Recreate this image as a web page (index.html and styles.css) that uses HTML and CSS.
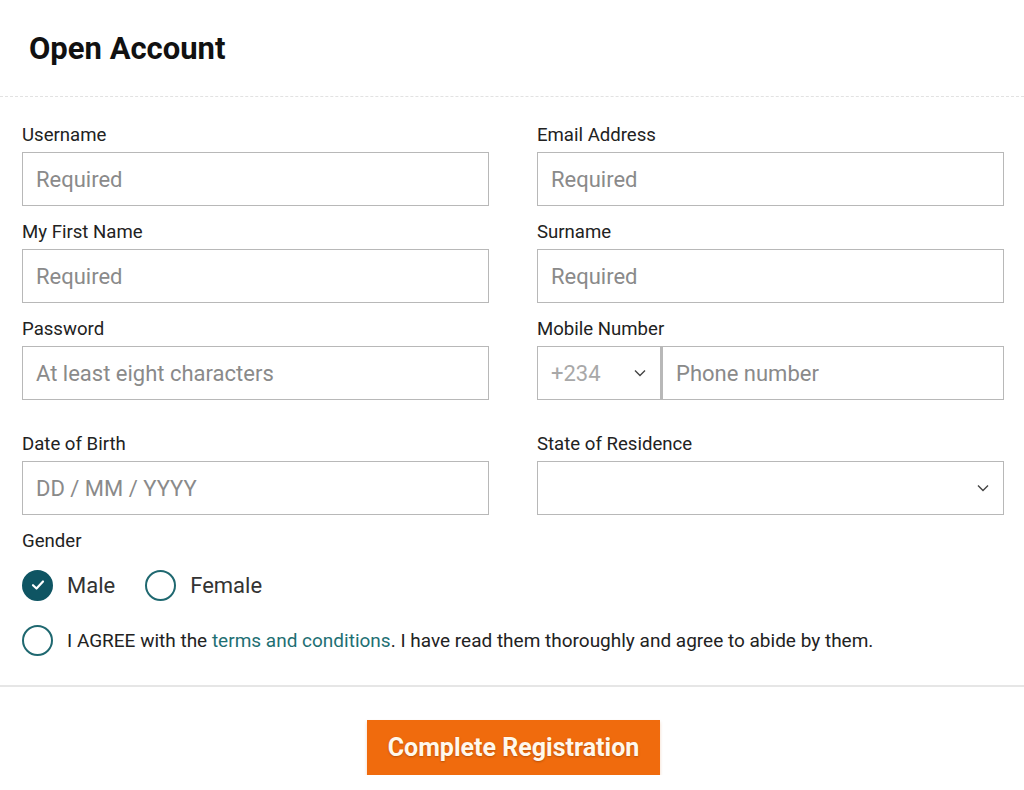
FILE: index.html
```html
<!DOCTYPE html>
<html lang="en">
<head>
<meta charset="utf-8">
<title>Open Account</title>
<link rel="stylesheet" href="styles.css">
</head>
<body>
<div class="page">
  <header class="header">
    <h1 class="title">Open Account</h1>
  </header>
  <form class="form">
    <div class="grid">
      <div class="field">
        <label class="label">Username</label>
        <div class="input"><span class="ph">Required</span></div>
      </div>
      <div class="field">
        <label class="label">Email Address</label>
        <div class="input"><span class="ph">Required</span></div>
      </div>
      <div class="field">
        <label class="label">My First Name</label>
        <div class="input"><span class="ph">Required</span></div>
      </div>
      <div class="field">
        <label class="label">Surname</label>
        <div class="input"><span class="ph">Required</span></div>
      </div>
      <div class="field">
        <label class="label">Password</label>
        <div class="input"><span class="ph">At least eight characters</span></div>
      </div>
      <div class="field">
        <label class="label">Mobile Number</label>
        <div class="phone">
          <div class="code">
            <span class="code-text">+234</span>
            <svg class="chev" width="12" height="8" viewBox="0 0 12 8"><path d="M1 1.5 L6 6.5 L11 1.5" fill="none" stroke="#444" stroke-width="1.4"/></svg>
          </div>
          <div class="input num"><span class="ph">Phone number</span></div>
        </div>
      </div>
      <div class="field spaced">
        <label class="label">Date of Birth</label>
        <div class="input"><span class="ph">DD / MM / YYYY</span></div>
      </div>
      <div class="field spaced">
        <label class="label">State of Residence</label>
        <div class="input select">
          <svg class="chev" width="12" height="8" viewBox="0 0 12 8"><path d="M1 1.5 L6 6.5 L11 1.5" fill="none" stroke="#444" stroke-width="1.4"/></svg>
        </div>
      </div>
    </div>

    <div class="gender">
      <span class="label">Gender</span>
      <div class="radios">
        <span class="opt">
          <span class="radio checked">
            <svg width="14" height="12" viewBox="0 0 14 12"><path d="M2 6.2 L5.5 9.5 L12 2.5" fill="none" stroke="#fff" stroke-width="2.2" stroke-linecap="round" stroke-linejoin="round"/></svg>
          </span>
          <span class="opt-text">Male</span>
        </span>
        <span class="opt">
          <span class="radio"></span>
          <span class="opt-text">Female</span>
        </span>
      </div>
    </div>

    <div class="agree">
      <span class="radio"></span>
      <span class="agree-text">I AGREE with the <a class="link">terms and conditions</a>. I have read them thoroughly and agree to abide by them.</span>
    </div>

    <div class="footer">
      <button type="button" class="btn">Complete Registration</button>
    </div>
  </form>
</div>
</body>
</html>
```

FILE: styles.css
```css
* { box-sizing: border-box; }
html, body { margin: 0; padding: 0; background: #fff; }
body {
  font-family: Roboto, "Liberation Sans", Arial, sans-serif;
  color: #222;
}
.page { width: 1024px; }
.header {
  height: 97px;
  border-bottom: 1px dashed #e2e2e2;
  display: flex;
  align-items: center;
  padding-left: 29px;
}
.title {
  margin: 0;
  font-size: 31px;
  font-weight: 700;
  color: #111;
  letter-spacing: 0;
}
.form { padding: 28px 20px 0 22px; }
.grid {
  display: grid;
  grid-template-columns: 467px 467px;
  column-gap: 48px;
  row-gap: 16px;
}
.field { display: flex; flex-direction: column; }
.field.spaced { margin-top: 18px; }
.label {
  font-size: 18.6px;
  line-height: 20px;
  color: #222;
  margin-bottom: 7px;
  display: block;
}
.input {
  height: 54px;
  border: 1px solid #b8b8b8;
  display: flex;
  align-items: center;
  padding-left: 13px;
  background: #fff;
}
.ph { font-size: 22px; color: #8a8a8a; }
.phone { display: flex; height: 54px; }
.code {
  width: 124px;
  height: 54px;
  border: 1px solid #b8b8b8;
  display: flex;
  align-items: center;
  justify-content: space-between;
  padding: 0 14px 0 13px;
}
.code-text { font-size: 22px; color: #a8a8a8; }
.input.num { flex: 1; border-left: 2px solid #b8b8b8; }
.select { justify-content: flex-end; padding-right: 14px; }
.chev { display: block; }

.gender { margin-top: 16px; }
.gender .label { margin-bottom: 0; }
.radios {
  display: flex;
  align-items: center;
  margin-top: 18px;
  height: 32px;
}
.opt { display: flex; align-items: center; margin-right: 30px; }
.opt-text { font-size: 22px; color: #333; margin-left: 14px; }
.radio {
  width: 31px;
  height: 31px;
  border-radius: 50%;
  border: 2px solid #1f6870;
  display: flex;
  align-items: center;
  justify-content: center;
  flex-shrink: 0;
}
.radio.checked { background: #0f5563; border-color: #0f5563; }
.agree {
  display: flex;
  align-items: center;
  margin-top: 23px;
  height: 32px;
}
.agree-text { font-size: 19px; color: #222; margin-left: 14px; }
.link { color: #1e6f73; text-decoration: none; }
.footer {
  margin: 29px -20px 0 -22px;
  border-top: 2px solid #e6e6e6;
  padding-top: 33px;
  display: flex;
  justify-content: center;
}
.btn {
  width: 293px;
  height: 55px;
  background: #f06b0d;
  border: none;
  border-radius: 0;
  color: #fff8ec;
  font-family: Roboto, "Liberation Sans", Arial, sans-serif;
  font-size: 25px;
  font-weight: 700;
  text-shadow: 0 1px 2px rgba(120, 50, 0, 0.45);
  box-shadow: 0 2px 3px rgba(200, 90, 0, 0.25);
  margin-left: 3px;
}
```
